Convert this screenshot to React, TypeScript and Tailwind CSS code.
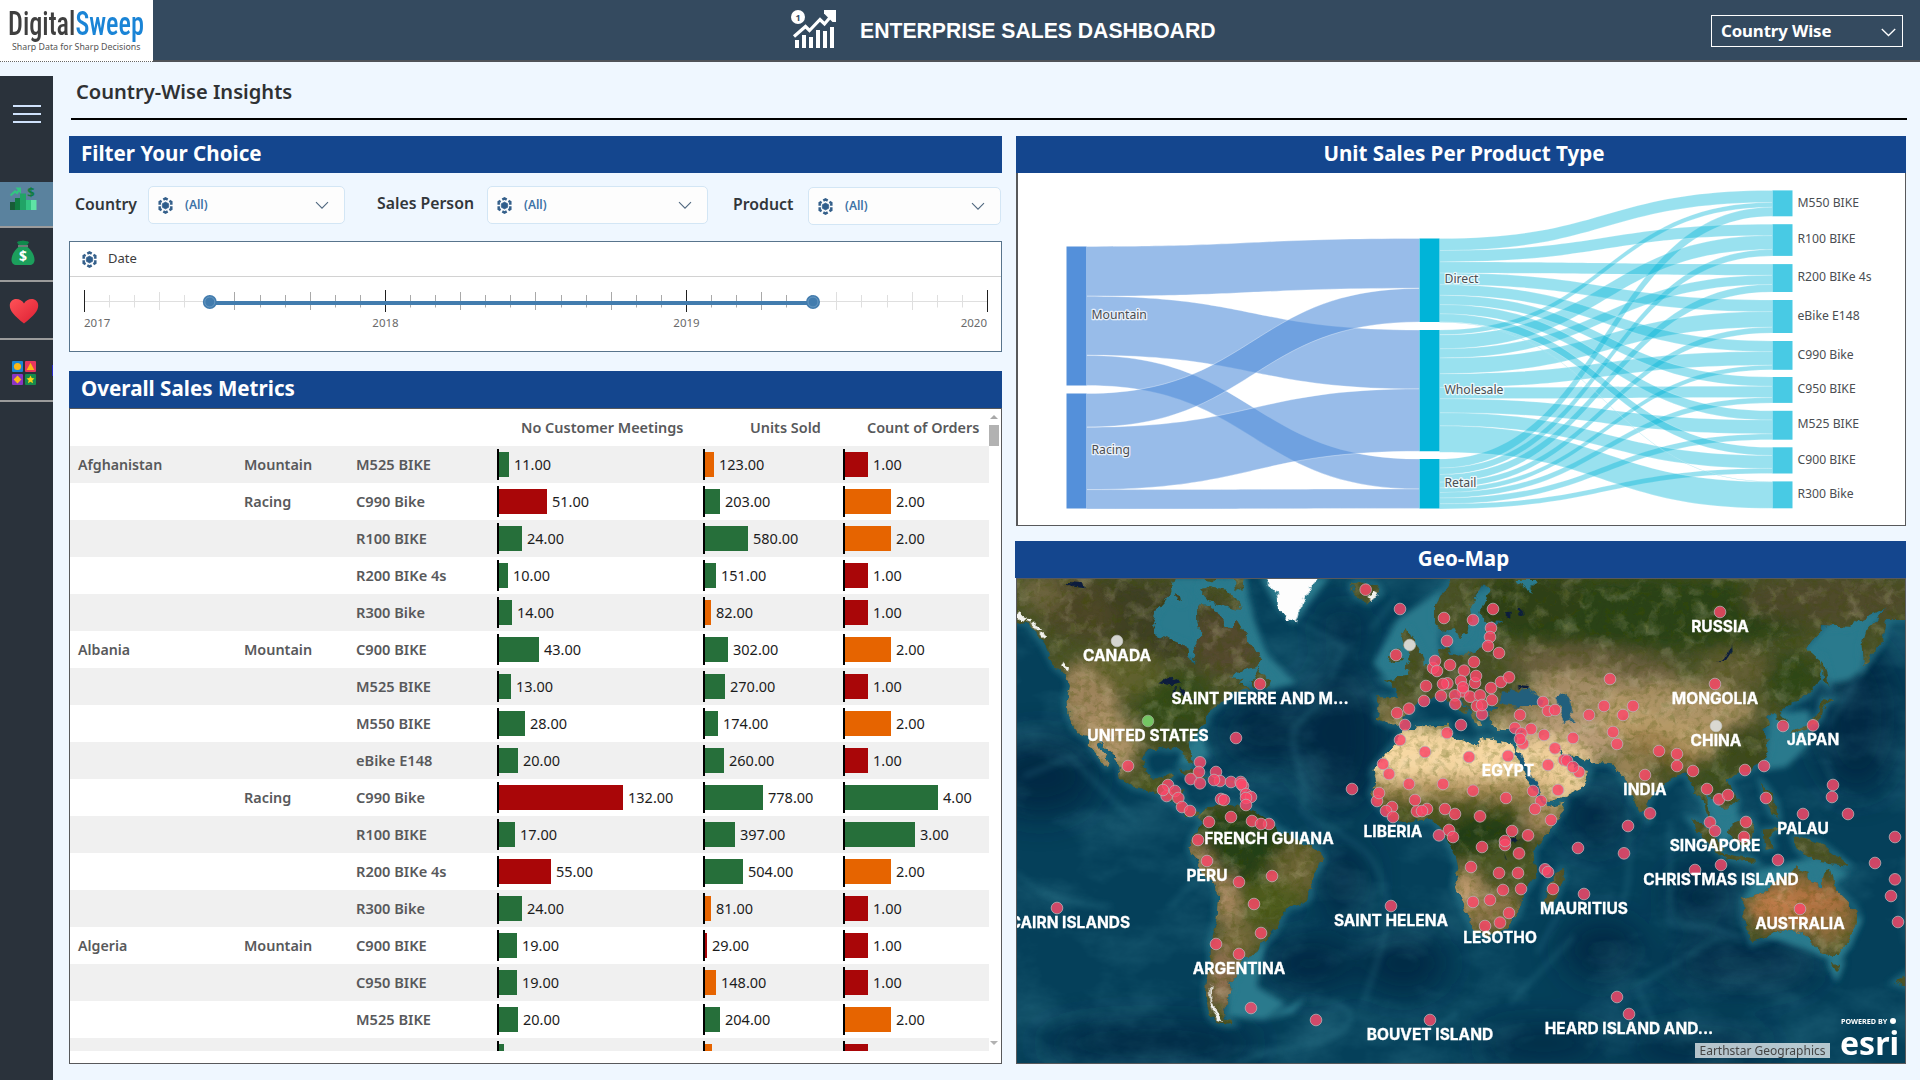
import React from 'react';

/* ---------- Sales metrics data ---------- */
type Tone = 'g' | 'r' | 'o';
type Row = [string, string, string, number, Tone, number, Tone, number, Tone];
const rows: Row[] = [
  ['Afghanistan', 'Mountain', 'M525 BIKE', 11, 'g', 123, 'o', 1, 'r'],
  ['', 'Racing', 'C990 Bike', 51, 'r', 203, 'g', 2, 'o'],
  ['', '', 'R100 BIKE', 24, 'g', 580, 'g', 2, 'o'],
  ['', '', 'R200 BIKe 4s', 10, 'g', 151, 'g', 1, 'r'],
  ['', '', 'R300 Bike', 14, 'g', 82, 'o', 1, 'r'],
  ['Albania', 'Mountain', 'C900 BIKE', 43, 'g', 302, 'g', 2, 'o'],
  ['', '', 'M525 BIKE', 13, 'g', 270, 'g', 1, 'r'],
  ['', '', 'M550 BIKE', 28, 'g', 174, 'g', 2, 'o'],
  ['', '', 'eBike E148', 20, 'g', 260, 'g', 1, 'r'],
  ['', 'Racing', 'C990 Bike', 132, 'r', 778, 'g', 4, 'g'],
  ['', '', 'R100 BIKE', 17, 'g', 397, 'g', 3, 'g'],
  ['', '', 'R200 BIKe 4s', 55, 'r', 504, 'g', 2, 'o'],
  ['', '', 'R300 Bike', 24, 'g', 81, 'o', 1, 'r'],
  ['Algeria', 'Mountain', 'C900 BIKE', 19, 'g', 29, 'r', 1, 'r'],
  ['', '', 'C950 BIKE', 19, 'g', 148, 'o', 1, 'r'],
  ['', '', 'M525 BIKE', 20, 'g', 204, 'g', 2, 'o'],
];
const tone: Record<Tone, string> = { g: 'bg-[#266f3a]', r: 'bg-[#a90608]', o: 'bg-[#e66400]' };

function BarCell({ value, scale, t, label = true }: { value: number; scale: number; t: Tone; label?: boolean }) {
  return (
    <div className="flex h-[37px] items-center">
      <div className="h-[31px] w-[2px] shrink-0 bg-black" />
      <div className={`h-[25px] shrink-0 ${tone[t]}`} style={{ width: Math.round(value * scale) }} />
      {label && <span className="ml-[5px] text-[14.500px] text-[#1c1c1c]">{value.toFixed(2)}</span>}
    </div>
  );
}

const gridCols = 'grid grid-cols-[8px_166px_112px_141px_206px_140px_146px]';

function MetricsTable() {
  return (
    <div className="flex h-[656px] w-[933px] border border-[#58595b] bg-white">
      <div className="h-[642px] w-[919px] overflow-hidden">
        <div className={`${gridCols} h-[37px] items-center text-[14.450px] font-semibold whitespace-nowrap text-[#58595b]`}>
          <span /><span /><span /><span />
          <span className="pl-[24px]">No Customer Meetings</span>
          <span className="pl-[47px]">Units Sold</span>
          <span className="pl-[24px]">Count of Orders</span>
        </div>
        {rows.map((r, i) => (
          <div key={i} className={`${gridCols} h-[37px] items-center text-[14.600px] font-semibold whitespace-nowrap text-[#58595b] ${i % 2 ? 'bg-white' : 'bg-[#f0f0f0]'}`}>
            <span />
            <span className="text-[14.200px]">{r[0]}</span>
            <span className="text-[14.400px]">{r[1]}</span>
            <span>{r[2]}</span>
            <div className="font-normal"><BarCell value={r[3]} scale={0.94} t={r[4]} /></div>
            <div className="font-normal"><BarCell value={r[5]} scale={0.0747} t={r[6]} /></div>
            <div className="font-normal"><BarCell value={r[7]} scale={23.2} t={r[8]} /></div>
          </div>
        ))}
        <div className={`${gridCols} h-[37px] bg-[#f0f0f0]`}>
          <span /><span /><span /><span />
          <BarCell value={5} scale={1} t="g" label={false} />
          <BarCell value={7} scale={1} t="o" label={false} />
          <BarCell value={23} scale={1} t="r" label={false} />
        </div>
      </div>
      <div className="flex h-[636px] w-[10px] flex-col items-center pt-[6px]">
        <div className="h-0 w-0 border-x-[4px] border-b-[4px] border-x-transparent border-b-[#a8a8a8]" />
        <div className="mt-[6px] h-[21px] w-[10px] bg-[#b2b2b2]" />
        <div className="mt-auto h-0 w-0 border-x-[4px] border-t-[4px] border-x-transparent border-t-[#b2b2b2]" />
      </div>
    </div>
  );
}

/* ---------- Filters ---------- */
function CubeIcon() {
  return (
    <svg width="15" height="17" viewBox="0 0 15 17" className="shrink-0">
      <path d="M5.300 2.700 7.500 1.500l2.200 1.200M11.400 3.900l1.900 1.100v2.700M13.300 9.300V12l-1.900 1.100M9.700 14.300 7.500 15.500l-2.200-1.200M3.600 13.100 1.700 12V9.300M1.700 7.700V5l1.900-1.100" fill="none" stroke="#345f8a" strokeWidth="2.500" />
      <path d="M7.500 5 10.700 6.700v3.600L7.500 12 4.300 10.300V6.700z" fill="#2f5d8b" stroke="#2f5d8b" strokeWidth=".6" />
    </svg>
  );
}

function Select({ className }: { className: string }) {
  return (
    <div className={`flex h-[38px] items-center rounded-[5px] border border-[#d3e6f5] bg-[#fdfdfd] pl-[9px] pr-[15px] ${className}`}>
      <CubeIcon />
      <span className="ml-[12px] text-[12px] font-semibold text-[#3d73a6]">(All)</span>
      <svg className="ml-auto" width="14" height="9" viewBox="0 0 14 9"><path d="M1 1.200 7 7.200 13 1.200" fill="none" stroke="#50687f" strokeWidth="1.100" /></svg>
    </div>
  );
}

function DateSlider() {
  const months = Array.from({ length: 37 }, (_, i) => i);
  return (
    <div className="h-[111px] w-[933px] border border-[#58748c] bg-white">
      <div className="flex h-[35px] items-center border-b border-[#d2d2d2] pl-[12px]">
        <CubeIcon />
        <span className="ml-[11px] text-[13px] text-[#3c3c3c]">Date</span>
      </div>
      <svg width="931" height="74" viewBox="70 277 931 74">
        <path d="M84.500 301.500H987.500" stroke="#dfdfdf" />
        {months.map((m) => {
          const x = Math.round(84 + m * 25.080) + 0.5;
          const major = m % 12 === 0;
          const q = m % 3 === 0;
          const inside = x > 209 && x < 815;
          return <path key={m} d={`M${x} ${major ? 290 : q ? 292 : 295}V${major ? 312 : q ? 310 : 307.5}`} stroke={major ? '#1f1f1f' : inside ? '#a9a9a9' : '#dfdfdf'} />;
        })}
        <path d="M210 303H813" stroke="#427cae" strokeWidth="4" />
        {[209.800, 813].map((x) => (
          <g key={x}><circle cx={x} cy="302" r="7" fill="#427cae" /><circle cx={x} cy="302" r="5" fill="none" stroke="#7fa9cc" strokeWidth=".6" /></g>
        ))}
        <g fontSize="11.500" fill="#6a6a6a">
          <text x="84" y="327">2017</text>
          <text x="385.500" y="327" textAnchor="middle">2018</text>
          <text x="686.500" y="327" textAnchor="middle">2019</text>
          <text x="987" y="327" textAnchor="end">2020</text>
        </g>
      </svg>
    </div>
  );
}

/* ---------- Sankey ---------- */
type Flow = [number, number, number];
const leftFlows: Flow[] = [[246.5, 238.5, 49.7], [296.2, 330, 59], [355.4, 459, 30], [393.5, 288.4, 33.6], [427.2, 388.9, 62.4], [489.6, 489, 19.4]];
const products: { name: string; y0: number; y1: number; d: number; w: number }[] = [
  { name: 'M550 BIKE', y0: 190.4, y1: 216.3, d: 12, w: 4.8 },
  { name: 'R100 BIKE', y0: 224.2, y1: 255.9, d: 11.4, w: 13.8 },
  { name: 'R200 BIKe 4s', y0: 264.1, y1: 292, d: 11.2, w: 9.1 },
  { name: 'eBike E148', y0: 300, y1: 333, d: 11.6, w: 15.6 },
  { name: 'C990 Bike', y0: 341, y1: 369.8, d: 10.600, w: 13.600 },
  { name: 'C950 BIKE', y0: 377, y1: 402.900, d: 9.300, w: 11.200 },
  { name: 'M525 BIKE', y0: 410.800, y1: 439.700, d: 9.200, w: 13.900 },
  { name: 'C900 BIKE', y0: 447.300, y1: 473.500, d: 8.200, w: 12.900 },
  { name: 'R300 Bike', y0: 481.400, y1: 508.300, d: 0.500, w: 26.400 },
];
const ribbon = (x0: number, x1: number, [a, b, h]: Flow) => {
  const m = (x0 + x1) / 2;
  return `M${x0} ${a}C${m} ${a} ${m} ${b} ${x1} ${b}V${b + h}C${m} ${b + h} ${m} ${a + h} ${x0} ${a + h}Z`;
};

function Sankey() {
  let d = 238.5, w = 330, r = 459;
  const right: Flow[] = [];
  products.forEach((p) => {
    const rest = p.name === 'R300 Bike' ? 0 : p.y1 - p.y0 - p.d - p.w;
    right.push([d, p.y0, p.d], [w, p.y0 + p.d, p.w]);
    if (rest > 0) right.push([r, p.y0 + p.d + p.w, rest]);
    d += p.d; w += p.w + 0.12; r += rest;
  });
  return (
    <svg width="887" height="352" viewBox="1018 173 887 352">
      <g fill="#5490da" fillOpacity=".6" stroke="#fff" strokeOpacity=".55" strokeWidth=".6">
        {leftFlows.map((f, i) => <path key={i} d={ribbon(1086.5, 1419.5, f)} />)}
      </g>
      <g fill="#00b4d8" fillOpacity=".4" stroke="#fff" strokeOpacity=".4" strokeWidth=".5">
        {right.map((f, i) => <path key={i} d={ribbon(1439.5, 1772.5, f)} />)}
      </g>
      <path fill="#5490da" d="M1066.5 246.500h20v139h-20zM1066.500 393.500h20v115h-20z" />
      <path fill="#00b4d8" d="M1419.500 238.500h20v83.500h-20zM1419.500 330h20v121.300h-20zM1419.500 459h20v49.500h-20z" />
      {products.map((p) => <rect key={p.name} x="1772.500" width="20" y={p.y0} height={p.y1 - p.y0} fill="#48cae4" />)}
      <g fontSize="12.200" fill="#4a4e52" stroke="#fff" strokeOpacity=".8" strokeWidth="2.600" strokeLinejoin="round" paintOrder="stroke">
        <text x="1091.500" y="319">Mountain</text>
        <text x="1091.500" y="454">Racing</text>
        <text x="1444.500" y="283">Direct</text>
        <text x="1444.500" y="394">Wholesale</text>
        <text x="1444.500" y="487">Retail</text>
        {products.map((p) => <text key={p.name} x="1797.500" y={(p.y0 + p.y1) / 2 + 3.200}>{p.name}</text>)}
      </g>
    </svg>
  );
}

/* ---------- Satellite map ---------- */
const land: string[] = [
  // North and Central America
  'M0 0V145L60 165 85 200 110 240 135 290 170 315 180 345 170 390 172 430 190 470 205 490 235 500 250 540 290 592 296 582 265 520 272 510 310 560 330 600 332 625 370 650 410 660 440 668 480 690 505 715 530 738 562 738 566 725 540 713 520 700 515 660 472 655 468 640 490 618 480 610 450 625 430 630 405 600 398 560 415 540 450 533 480 540 500 530 520 545 530 575 545 580 546 555 535 520 560 490 590 455 590 430 625 405 640 390 665 370 700 362 722 355 700 350 690 340 705 330 660 325 680 305 740 290 755 270 735 235 710 200 680 150 665 172 650 175 640 140 600 110 565 110 565 150 575 200 550 240 550 285 535 255 530 230 480 210 440 195 425 160 440 120 480 75 490 24V0Z',
  'M570 60 600 48 650 60 680 88 690 120 650 110 600 92ZM665 10H702L697 62 680 55ZM495 60 510 75 512 95 498 88ZM590 10 620 20 610 40 580 35Z',
  'M722 335 745 290 758 312 780 330 775 352 730 348Z',
  'M500 600 540 597 592 622 560 624ZM600 622 645 640 610 642ZM655 636 680 640 660 644Z',
  'M1022 45 1045 33 1100 45 1115 70 1075 97 1040 80Z',
  // South America
  'M562 738 600 708 650 700 700 712 740 725 790 760 803 780 840 798 870 820 925 840 937 862 930 885 905 920 900 950 895 990 880 1000 835 1012 815 1040 800 1075 775 1110 750 1118 745 1140 735 1157 700 1162 690 1185 675 1195 677 1215 655 1235 665 1255 650 1290 643 1315 650 1345 672 1362 650 1364 620 1356 600 1340 588 1290 590 1240 602 1180 602 1120 620 1040 625 970 615 940 580 915 555 870 538 835 550 800 565 780 578 752Z',
  // Europe and Asia
  'M1340 0H2700V150L2630 150 2622 200 2580 265 2560 290 2555 230 2570 180 2600 150 2630 112 2600 130 2550 150 2520 170 2440 165 2400 220 2390 235 2430 270 2435 300 2420 340 2390 380 2350 395 2310 430 2330 450 2325 462 2310 450 2285 430 2265 440 2280 470 2260 480 2272 510 2275 540 2260 570 2220 600 2190 612 2165 620 2150 632 2165 660 2182 690 2160 712 2140 716 2130 700 2110 690 2095 670 2092 700 2104 740 2122 770 2110 765 2090 730 2080 690 2060 670 2040 640 2030 615 2010 610 1985 625 1960 650 1930 660 1915 700 1905 720 1890 726 1870 690 1850 640 1840 620 1820 600 1805 580 1760 575 1720 570 1700 558 1662 555 1645 528 1655 562 1692 590 1740 600 1720 650 1650 685 1605 695 1590 670 1560 620 1540 580 1518 540 1526 500 1545 480 1510 475 1460 480 1440 460 1438 425 1470 415 1420 410 1400 430 1420 470 1400 472 1385 430 1365 400 1340 370 1320 358 1340 390 1375 415 1370 432 1350 420 1310 390 1290 375 1260 380 1235 385 1215 400 1200 430 1170 462 1140 467 1120 450 1103 447 1110 400 1098 385 1160 385 1167 360 1145 340 1120 330 1190 320 1200 300 1250 285 1288 270 1288 240 1310 228 1318 252 1350 257 1400 245 1425 215 1430 180 1480 155 1420 152 1415 120 1442 60 1422 45 1380 110 1385 140 1370 190 1350 208 1330 170 1300 190 1275 160 1275 110Z',
  'M1195 178 1215 215 1240 265 1240 292 1185 302 1200 262 1182 222 1172 190ZM1145 237 1178 240 1170 270 1138 277Z',
  // Africa and Madagascar
  'M1180 478 1235 470 1315 458 1325 500 1400 527 1410 504 1480 515 1507 520 1520 555 1550 620 1580 680 1610 712 1665 698 1660 720 1620 780 1570 840 1576 920 1540 970 1530 1020 1490 1072 1430 1097 1395 1092 1360 1010 1333 940 1345 890 1320 820 1290 770 1265 745 1200 757 1150 752 1100 700 1084 670 1095 640 1088 600 1120 560 1155 520Z',
  'M1656 900 1662 920 1645 965 1622 1012 1602 995 1612 940Z',
  // Islands of Asia and Oceania
  'M2435 385 2472 388 2448 402 2438 440 2420 460 2362 482 2340 494 2348 477 2408 450 2430 420ZM2438 270 2452 320 2456 350 2440 330 2433 280Z',
  'M1908 722 1922 740 1912 752ZM2255 638 2275 660 2300 700 2306 746 2282 732 2266 690Z',
  'M2038 745 2072 755 2132 820 2142 850 2120 846 2070 792ZM2128 850 2220 864 2242 882 2150 868ZM2165 762 2215 742 2236 770 2215 832 2180 822 2160 792ZM2258 782 2312 775 2276 800 2292 832 2264 840Z',
  'M2350 800 2430 818 2472 850 2515 887 2460 882 2410 872 2362 837Z',
  'M2200 990 2260 970 2290 940 2335 915 2350 895 2395 905 2395 930 2435 950 2445 898 2455 893 2470 950 2510 990 2540 1020 2540 1060 2515 1120 2480 1152 2435 1150 2410 1120 2380 1088 2330 1078 2270 1103 2225 1120 2215 1090 2200 1040ZM2465 1180 2495 1182 2480 1212ZM2700 1205 2652 1238 2700 1252Z',
];

/* cx, cy, rx, ry, fill, opacity, rotation */
type Patch = [number, number, number, number, string, number, number];
const patches: Patch[] = [
  [420, 150, 330, 110, '#3f3f22', 0.9, 10], [180, 100, 150, 90, '#574b2b', 0.6, 30], [640, 220, 110, 90, '#574a31', 0.9, 20],
  [90, 70, 70, 50, '#7a7148', 0.7, 20], [240, 400, 85, 130, '#9f845b', 1, -15], [300, 520, 80, 90, '#b19469', 1, -20], [350, 300, 120, 70, '#66662f', 0.8, 20],
  [490, 400, 120, 80, '#324a1a', 0.9, -20], [520, 490, 70, 45, '#33491d', 0.9, 0], [420, 640, 60, 22, '#4d5a23', 1, 0],
  [700, 800, 180, 80, '#233f12', 1, 0], [640, 870, 130, 70, '#263f14', 1, 20], [860, 900, 70, 90, '#6f6534', 0.9, 20], [770, 1000, 110, 70, '#4f5c20', 0.9, 0],
  [650, 990, 32, 80, '#b48e66', 1, -10], [575, 870, 18, 70, '#c09a70', 1, -35], [640, 1210, 40, 110, '#957354', 1, 5], [690, 1110, 60, 50, '#80703f', 0.8, 0],
  [1900, 130, 520, 110, '#2c4317', 1, 0], [2450, 90, 260, 70, '#514b2d', 0.9, 0], [1560, 90, 160, 80, '#2d3f18', 1, 0], [1330, 330, 130, 60, '#46502a', 0.9, 0],
  [1750, 290, 260, 60, '#6f6040', 0.9, 5], [1750, 400, 210, 90, '#a58d66', 1, 10], [1650, 500, 180, 80, '#b59974', 1, 10], [1960, 470, 200, 90, '#b99c69', 1, 12],
  [2050, 400, 190, 60, '#ab9265', 1, 8], [1960, 540, 110, 36, '#8a6c33', 0.9, 20], [2180, 300, 110, 55, '#6c6238', 0.8, 0], [2350, 330, 90, 80, '#2e4518', 0.9, 0],
  [2200, 540, 90, 80, '#3b4a20', 0.95, 0], [2100, 630, 60, 80, '#3d4f20', 1, 0], [1860, 600, 60, 60, '#9b8457', 1, 0], [1905, 670, 50, 50, '#7b6d3d', 0.9, 0],
  [1640, 600, 120, 95, '#f0cf9a', 1, 25], [1150, 425, 50, 35, '#8a7748', 0.9, 0], [1520, 440, 90, 28, '#8e7b52', 1, 0],
  [1300, 560, 270, 105, '#f7d8a3', 1, 0], [1320, 470, 60, 20, '#9a8852', 0.7, 0], [1340, 660, 300, 40, '#b3935c', 0.9, 0], [1160, 720, 120, 42, '#45501f', 1, 0],
  [1370, 720, 200, 42, '#4d5423', 1, 0], [1430, 800, 130, 70, '#223c12', 1, 0], [1600, 740, 60, 50, '#a88a5e', 1, -30], [1470, 890, 120, 60, '#4c5726', 1, 0],
  [1370, 980, 50, 80, '#c29c70', 1, -10], [1450, 1020, 80, 60, '#8d7448', 1, 0], [1630, 950, 22, 60, '#6a5a30', 1, 15],
  [2370, 1010, 160, 75, '#b0713f', 1, 0], [2300, 1000, 80, 50, '#bd7c49', 1, 0], [2480, 1080, 60, 60, '#957140', 1, 0], [2500, 1120, 36, 40, '#4f5a28', 0.9, 20], [2370, 925, 70, 20, '#77683a', 0.9, 0],
];

const pins: [number, number][] = [
  [1067, 59], [1170, 117], [1158, 255], [750, 342], [678, 504], [354, 588], [570, 577], [567, 606], [542, 627], [570, 640], [618, 606], [630, 633], [612, 630], [663, 636], [692, 636], [699, 648], [694, 642], [708, 672], [723, 681], [708, 684], [708, 705], [633, 687], [642, 690], [474, 645], [470, 678], [459, 660], [495, 663], [505, 684], [516, 711], [540, 723], [597, 756], [663, 741], [726, 753], [777, 762], [753, 762], [1026, 657],
  [1302, 144], [1389, 150], [1449, 117], [1443, 174], [1440, 201], [1434, 228], [1467, 249], [1311, 213], [1269, 294], [1275, 273], [1281, 303], [1320, 285], [1362, 302], [1392, 276], [1395, 339], [1398, 318], [1353, 333], [1359, 364], [1359, 352], [1312, 340], [1299, 342], [1248, 348], [1242, 393], [1197, 416], [1161, 429], [1185, 465], [1170, 510], [1293, 378], [1335, 376], [1336, 402], [1380, 380], [1410, 376], [1443, 354], [1473, 336], [1497, 322], [1446, 390], [1401, 408], [1416, 433], [1416, 405], [1353, 465], [1311, 489], [1530, 435], [1599, 396], [1614, 423], [1635, 420], [1515, 474], [1563, 477], [1534, 490], [1539, 521], [1530, 507], [1602, 495], [1689, 504], [1635, 535], [1494, 558], [1614, 585], [1662, 570], [1671, 572], [1707, 606], [1689, 591],
  [1245, 546], [1377, 561], [1119, 582], [1137, 612], [1197, 642], [1299, 642], [1389, 662], [1488, 684], [1101, 693], [1107, 669], [1215, 690], [1146, 711], [1128, 723], [1149, 741], [1221, 724], [1251, 717], [1236, 723], [1305, 717], [1335, 732], [1410, 739], [1569, 663], [1593, 693], [1644, 660], [1575, 717], [1623, 750], [1317, 780], [1287, 796], [1329, 801], [1506, 783], [1554, 796], [1485, 825], [1485, 813], [1416, 831], [1527, 850], [1383, 891], [1467, 909], [1524, 909], [1479, 960], [1533, 957], [1605, 898], [1614, 906], [1629, 957], [1389, 996], [1440, 990], [1497, 1029], [1470, 1058], [1425, 1068], [1143, 1008], [1722, 972], [1704, 834], [1842, 850], [1854, 768], [1920, 730], [1905, 615], [1800, 327], [1782, 408], [1737, 435], [1869, 408], [1839, 435], [1809, 486], [1821, 522],
  [2130, 126], [2115, 342], [2319, 468], [2409, 466], [1947, 543], [2001, 552], [2001, 588], [2049, 603], [2205, 600], [2262, 588], [2091, 657], [2127, 688], [2154, 675], [2268, 684], [2469, 645], [2466, 681], [2379, 732], [2514, 732], [2208, 756], [2100, 757],
  [564, 810], [591, 873], [687, 936], [786, 918], [732, 1002], [753, 1089], [618, 1122], [687, 1152], [723, 1314], [918, 1350], [1260, 1350], [141, 1014],
  [2115, 783], [2202, 801], [2304, 870], [2133, 885], [2055, 900], [2370, 1017], [2655, 801], [2595, 879], [2655, 928], [2643, 978], [2664, 1056], [1821, 1281], [1857, 1332],
];

const labels: [string, number, number][] = [
  ['CANADA', 321, 273], ['SAINT PIERRE AND M...', 750, 402], ['UNITED STATES', 414, 514], ['EGYPT', 1494, 618], ['LIBERIA', 1149, 801], ['RUSSIA', 2130, 187], ['MONGOLIA', 2115, 402], ['CHINA', 2118, 528], ['JAPAN', 2409, 525], ['INDIA', 1905, 675], ['PALAU', 2379, 792], ['FRENCH GUIANA', 777, 822], ['PERU', 591, 933], ['SAINT HELENA', 1143, 1068], ['PITCAIRN ISLANDS', 143, 1074], ['ARGENTINA', 687, 1212], ['BOUVET ISLAND', 1260, 1410], ['LESOTHO', 1470, 1119], ['MAURITIUS', 1722, 1032], ['SINGAPORE', 2115, 844], ['CHRISTMAS ISLAND', 2133, 946], ['AUSTRALIA', 2370, 1078], ['HEARD ISLAND AND...', 1857, 1392],
];

const ridges = [
  'M850 480C890 430 900 420 950 380M850 480C840 560 900 640 880 700S980 760 1000 800C1080 840 1120 900 1130 1000S1090 1200 1060 1300',
  'M870 160 1000 230 960 330M1080 180 1160 80M40 620 180 560 380 760M18 910C80 960 130 1000 300 1010',
  'M1980 760V1060C2060 1080 2100 1060 2200 1110M1860 620C1850 800 1870 900 1840 1000M1690 1100 1500 1300',
  'M2690 860 2670 1000 2690 1120M2130 1100 1880 1250 1950 1400M2450 720C2480 660 2470 620 2440 560M2625 200 2450 470',
  'M480 1010 560 930M680 1480C760 1430 900 1440 980 1390S1020 1300 900 1290M1240 1400 1340 1330M1580 1150 1660 1010',
];

function WorldMap() {
  return (
    <svg className="absolute inset-0 h-full w-full" viewBox="21 27 2664 1452" preserveAspectRatio="none">
      <defs>
        <clipPath id="landClip">{land.map((d, i) => <path key={i} d={d} />)}</clipPath>
        <filter id="soft" x="-10%" y="-10%" width="120%" height="120%"><feGaussianBlur stdDeviation="9" /></filter>
        <filter id="softer" x="-50%" y="-50%" width="200%" height="200%"><feGaussianBlur stdDeviation="24" /></filter>
        <filter id="deep" x="-50%" y="-50%" width="200%" height="200%"><feGaussianBlur stdDeviation="50" /></filter>
        <filter id="coast" x="0" y="0" width="100%" height="100%">
          <feTurbulence type="fractalNoise" baseFrequency=".035" numOctaves="3" seed="4" result="n" />
          <feDisplacementMap in="SourceGraphic" in2="n" scale="26" xChannelSelector="R" yChannelSelector="G" />
        </filter>
        <filter id="grainDark" x="0" y="0" width="100%" height="100%">
          <feTurbulence type="fractalNoise" baseFrequency=".05" numOctaves="5" seed="11" />
          <feColorMatrix values="0 0 0 0 .05  0 0 0 0 .08  0 0 0 0 0  2.600 0 0 0 -1.150" />
        </filter>
        <filter id="grainLight" x="0" y="0" width="100%" height="100%">
          <feTurbulence type="fractalNoise" baseFrequency=".02" numOctaves="6" seed="29" />
          <feColorMatrix values="0 0 0 0 .85  0 0 0 0 .76  0 0 0 0 .55  0 2.400 0 0 -1.200" />
        </filter>
        <filter id="sea" x="0" y="0" width="100%" height="100%">
          <feTurbulence type="fractalNoise" baseFrequency=".004 .007" numOctaves="6" seed="7" />
          <feColorMatrix values="0 0 0 0 .12  0 0 0 0 .46  0 0 0 0 .54  0 2 0 0 -.850" />
        </filter>
      </defs>
      <rect width="2700" height="1500" fill="#05405a" />
      <g fill="#01223c" opacity=".75" filter="url(#deep)">
        <ellipse cx="90" cy="620" rx="170" ry="120" /><ellipse cx="760" cy="480" rx="130" ry="110" /><ellipse cx="990" cy="500" rx="130" ry="220" />
        <ellipse cx="900" cy="1180" rx="140" ry="80" /><ellipse cx="1180" cy="1180" rx="130" ry="90" /><ellipse cx="1000" cy="930" rx="70" ry="120" />
        <ellipse cx="2540" cy="440" rx="130" ry="230" /><ellipse cx="2200" cy="1180" rx="230" ry="80" /><ellipse cx="2080" cy="980" rx="110" ry="90" /><ellipse cx="1780" cy="1140" rx="120" ry="90" />
        <ellipse cx="420" cy="1420" rx="330" ry="60" /><ellipse cx="1600" cy="1420" rx="200" ry="50" /><ellipse cx="2060" cy="1430" rx="220" ry="50" /><ellipse cx="1760" cy="740" rx="90" ry="90" /><ellipse cx="1000" cy="180" rx="70" ry="60" />
      </g>
      <rect width="2700" height="1500" filter="url(#sea)" opacity=".24" />
      <g fill="none" stroke="#3b8a9c" strokeWidth="12" opacity=".3" filter="url(#soft)">{ridges.map((d, i) => <path key={i} d={d} />)}</g>
      {/* shallow shelves */}
      <g fill="#2b7a8d" filter="url(#soft)">
        <path d="M420 20H700L780 330 700 350 600 300 420 200ZM700 60 770 250 860 340 780 360 740 300ZM750 20 800 110 850 165 890 110 960 20ZM1160 150 1290 60 1290 300 1140 345 1090 280ZM1330 100 1460 40 1440 250 1320 260ZM2380 240 2450 160 2620 120 2580 180 2560 300 2520 330 2460 340ZM2280 430 2400 420 2400 520 2330 590 2260 600ZM2080 680 2180 700 2190 760 2140 840ZM2240 900 2420 860 2520 910 2440 960 2200 1000Z" />
        <path d="M655 1200 770 1110 740 1250 830 1300 760 1350 650 1340ZM890 1280 850 1330 760 1350ZM2210 1080 2560 1040 2500 1160 2480 1240 2450 1160ZM1340 100 1300 200 1340 260ZM500 590 600 560 570 470Z" />
      </g>
      <g fill="none" stroke="#2b7a8d" strokeWidth="16" opacity=".75" filter="url(#soft)">{land.map((d, i) => <path key={i} d={d} />)}</g>
      <g filter="url(#coast)">
        <g clipPath="url(#landClip)">
          <rect width="2700" height="1500" fill="#4a5229" />
          <g filter="url(#softer)">
            {patches.map(([cx, cy, rx, ry, f, o, a], i) => <ellipse key={i} cx={cx} cy={cy} rx={rx} ry={ry} fill={f} opacity={o} transform={`rotate(${a} ${cx} ${cy})`} />)}
          </g>
          <rect width="2700" height="1500" filter="url(#grainDark)" opacity=".34" />
          <rect width="2700" height="1500" filter="url(#grainLight)" opacity=".26" />
        </g>
        {/* ice */}
        <path fill="#fdfdfd" d="M768 0H945L895 60 872 110 860 157 830 147 805 112 800 70 775 45Z" />
        <path fill="none" stroke="#f2f2ee" strokeWidth="11" strokeDasharray="30 6 14 8" d="M18 135 70 160 105 205M150 285 175 300" />
        <path fill="#f2f2ee" d="M1075 80 1100 68 1105 80 1085 90ZM600 1250 607 1250 606 1300 640 1356 620 1350 602 1310Z" />
        {/* inland seas and lakes */}
        <path fill="#215f7b" d="M1470 402 1480 370 1500 352 1530 366 1560 360 1602 395 1590 408 1530 408ZM1640 378 1665 368 1680 400 1690 455 1662 462 1652 420Z" />
        <path fill="#2b7a8d" d="M1520 30H1590L1560 50 1568 75 1545 55Z" />
        <path fill="#0c1f3c" d="M448 340 480 320 512 340 480 346ZM490 352 500 352 497 385 487 380ZM515 350 535 362 530 378 515 368ZM525 390 560 378 550 388ZM1490 130 1508 128 1506 152 1492 150ZM1525 110 1535 112 1538 135 1528 130ZM2165 222 2168 240 2150 275 2125 280 2150 255ZM1502 800 1520 802 1518 818 1504 816ZM1480 845 1490 870 1484 868ZM170 35 220 40 225 55 190 50ZM1530 345 1555 348 1550 360 1532 358Z" />
        <path fill="none" stroke="#17587a" strokeWidth="13" d="M1524 550 1555 610 1590 672" />
      </g>
      <g stroke="#b9a9b0" strokeWidth="2.500" fill="#fb4869" fillOpacity=".82">
        {pins.map(([x, y], i) => <circle key={i} cx={x} cy={y} r="17.500" />)}
      </g>
      <g stroke="#c9c9c9" strokeWidth="2" fill="#dcdcd8" fillOpacity=".95">
        <circle cx="321" cy="213" r="17.500" /><circle cx="1199" cy="225" r="17.500" /><circle cx="2118" cy="468" r="17.500" />
      </g>
      <circle cx="414" cy="453" r="17.500" fill="#74c564" stroke="#a9b7a0" strokeWidth="2" />
      <g fontFamily="Inter, sans-serif" fontWeight="700" fontSize="46.500" fill="#fff" stroke="#fff" strokeWidth=".8" textAnchor="middle">
        {labels.map(([t, x, y]) => <text key={t} x={x} y={y}>{t}</text>)}
      </g>
    </svg>
  );
}

/* ---------- Chrome ---------- */
function PanelTitle({ children, center = false }: { children: React.ReactNode; center?: boolean }) {
  return <h2 className={`flex h-[37px] shrink-0 items-center bg-[#14468e] pb-[2px] text-[20.600px] font-bold text-white ${center ? 'justify-center pl-[6px]' : 'pl-[12px]'}`}>{children}</h2>;
}

function Header() {
  return (
    <header className="flex h-[62px] shrink-0 border-b-2 border-[#505358] bg-[#344a5f]">
      <div className="h-[62px] w-[153px] shrink-0 border-b border-dotted border-[#666] bg-white pl-[8px]">
        <div className="mt-[4px] h-[37px] origin-left scale-x-[0.795] whitespace-nowrap font-['Roboto_Condensed'] text-[33px] leading-[40px] font-medium text-[#3f3f3f]">
          Digital<span className="text-[#1a84d6]">Sweep</span>
        </div>
        <div className="ml-[4px] text-[8.800px] leading-[13px] whitespace-nowrap text-[#555]">Sharp Data for Sharp Decisions</div>
      </div>
      <svg className="mt-[8px] ml-[637px] shrink-0" width="48" height="42" viewBox="790 8 48 42">
        <circle cx="798" cy="17" r="7" fill="#fff" />
        <text x="798" y="20.500" textAnchor="middle" fontSize="9" fontWeight="700" fill="#344a5f">1</text>
        <path d="M794 36.500 805.500 26.500 809.500 30.500 820 19.500 824.500 24 832.500 14.500" fill="none" stroke="#fff" strokeWidth="3.200" />
        <path d="M824 10H836V22H832.500L824 13.500Z" fill="#fff" />
        <path d="M795 40h4v8h-4zM802 35h4v13h-4zM809 37h4v11h-4zM816 30h4v18h-4zM823 31h4v17h-4zM830 27h4v21h-4z" fill="#fff" />
      </svg>
      <h1 className="mt-[16px] ml-[22px] w-[400px] font-['Liberation_Sans'] text-[21.200px] leading-[30px] font-bold whitespace-nowrap text-white">ENTERPRISE SALES DASHBOARD</h1>
      <div className="mt-[15px] mr-[17px] ml-auto flex h-[32px] w-[192px] items-center border border-white pr-[6px] pl-[9px]">
        <span className="text-[16.800px] font-bold tracking-[-0.1px] text-white">Country Wise</span>
        <svg className="mt-[3px] ml-auto" width="15" height="9" viewBox="0 0 15 9"><path d="M.8 1 7.500 7.500 14.200 1" fill="none" stroke="#fff" strokeWidth="1.300" /></svg>
      </div>
    </header>
  );
}

function Sidebar() {
  return (
    <aside className="mt-[14px] flex w-[53px] shrink-0 flex-col bg-[#2a323b]">
      <div className="flex h-[106px] flex-col gap-[6px] pt-[29px] pl-[13px]">
        <i className="h-[2px] w-[28px] bg-[#cfe2fb]" /><i className="h-[2px] w-[28px] bg-[#cfe2fb]" /><i className="h-[2px] w-[28px] bg-[#cfe2fb]" />
      </div>
      <div className="h-[46px] border-b-2 border-[#9b9b9b] bg-[#5a829e] pt-[2px] pl-[9px]">
        <svg width="29" height="28" viewBox="9 184 29 28">
          <path d="M10.500 195.500 15 191.500 17 193 19.500 189.500" fill="none" stroke="#33c481" strokeWidth="2.200" /><path d="M15.500 187.500H21V194Z" fill="#33c481" />
          <text x="31" y="197" textAnchor="middle" fontSize="13" fontWeight="700" fill="#107c41">$</text>
          <path d="M10 202h5v8h-5z" fill="#185c37" /><path d="M15 198h5v12h-5z" fill="#107c41" /><path d="M20 193.500h6V210h-6z" fill="#21a366" /><path d="M26 200h5v10h-5z" fill="#33c481" /><path d="M31 200h5.500v10H31z" fill="#5fe3a5" />
        </svg>
      </div>
      <div className="h-[54px] border-b-2 border-[#9b9b9b] pt-[11px] pl-[10px]">
        <svg width="27" height="28" viewBox="10 239 27 28">
          <path d="M17 242.500c1-2 3-1 6-2 3 1 5 0 6 2l-3 4h-6z" fill="#0f8a4c" />
          <path d="M19 246.500h8c4 3.500 7.500 8 7.500 13.500 0 3-2 5-5 5h-13c-3 0-5-2-5-5 0-5.500 3.500-10 7.500-13.500z" fill="#1c9f5c" />
          <path d="M18 245h10v2H18z" fill="#6f7b78" />
          <text x="23" y="261" textAnchor="middle" fontSize="14" fontWeight="700" fill="#fff">$</text>
        </svg>
      </div>
      <div className="h-[58px] border-b-2 border-[#9b9b9b] pt-[16px] pl-[9px]">
        <svg width="30" height="27" viewBox="9 298 30 27">
          <defs><linearGradient id="heart" x1="0" y1="0" x2="1" y2="1"><stop stopColor="#ff5257" /><stop offset="1" stopColor="#dc1f33" /></linearGradient></defs>
          <path d="M24 323.500C14 315.500 9.800 311 9.800 305.500c0-4 3-6.500 6.500-6.500 3.200 0 6 1.500 7.700 4.500 1.700-3 4.500-4.500 7.700-4.500 3.500 0 6.500 2.500 6.500 6.500 0 5.500-4.200 10-14.200 18z" fill="url(#heart)" />
        </svg>
      </div>
      <div className="flex h-[62px] border-b-2 border-[#9b9b9b] pt-[20px] pl-[11px]">
        <svg width="26" height="27" viewBox="11 360 26 27">
          <rect x="12" y="361" width="11" height="11" rx="1" fill="#1b87d6" /><rect x="25" y="361" width="11" height="11" rx="1" fill="#e8375f" /><rect x="12" y="374" width="11" height="11" rx="1" fill="#8a35c4" /><rect x="25" y="374" width="11" height="11" rx="1" fill="#168a4c" />
          <circle cx="17.500" cy="366.500" r="3.600" fill="#fcb816" /><path d="M30.500 362.800 34.300 370H26.700Z" fill="#fcb816" /><path d="M17.500 375.600 21.400 379.500 17.500 383.400 13.600 379.500Z" fill="#fcb816" />
          <path d="M30.500 375.500 31.700 378.100 34.500 378.400 32.400 380.300 33 383.200 30.500 381.700 28 383.200 28.600 380.300 26.500 378.400 29.300 378.100Z" fill="#fcd116" />
        </svg>
        <i className="mt-[5px] ml-auto h-[11px] w-px bg-[#2a2ac8]" />
      </div>
    </aside>
  );
}

export default function App() {
  return (
    <div className="flex h-[1080px] w-[1920px] flex-col overflow-hidden bg-[#eff7ff] font-['Noto_Sans',sans-serif]">
      <Header />
      <div className="flex min-h-0 flex-1">
        <Sidebar />
        <main className="flex flex-1 flex-col pl-[16px]">
          <div className="ml-[2px] flex h-[58px] w-[1836px] items-start border-b-2 border-black pt-[18px] pl-[5px]">
            <span className="text-[20.100px] leading-[24px] font-semibold text-[#2f3133]">Country-Wise Insights</span>
          </div>
          <div className="mt-[16px] flex">
            <section className="flex w-[933px] flex-col">
              <PanelTitle>Filter Your Choice</PanelTitle>
              <div className="flex h-[68px] items-start pt-[13px] text-[15.800px] font-semibold text-[#32363a]">
                <span className="mt-[7px] w-[79px] pl-[6px]">Country</span>
                <Select className="w-[197px]" />
                <span className="mt-[6px] w-[142px] pl-[32px] whitespace-nowrap">Sales Person</span>
                <Select className="w-[221px]" />
                <span className="mt-[7px] w-[100px] pl-[25px]">Product</span>
                <Select className="mt-px w-[193px]" />
              </div>
              <DateSlider />
              <div className="mt-[19px] flex flex-col">
                <PanelTitle>Overall Sales Metrics</PanelTitle>
                <MetricsTable />
              </div>
            </section>
            <section className="ml-[14px] flex w-[890px] flex-col">
              <PanelTitle center>Unit Sales Per Product Type</PanelTitle>
              <div className="h-[353px] border-r border-b border-l-2 border-[#58595b] bg-white">
                <Sankey />
              </div>
              <div className="mt-[15px] -ml-px flex flex-col">
                <PanelTitle center>Geo-Map</PanelTitle>
              </div>
              <div className="relative h-[486px] overflow-hidden border border-[#58595b]">
                <WorldMap />
                <div className="absolute right-[75px] bottom-[5px] flex h-[15px] w-[135px] items-center justify-center bg-[#ffffffb3] text-[12px] whitespace-nowrap text-[#454545]">Earthstar Geographics</div>
                <div className="absolute right-[7px] bottom-[7px] flex h-[40px] w-[58px] flex-col justify-between text-white">
                  <div className="flex items-center gap-[3px] pl-px text-[7.200px] leading-[10px] font-bold whitespace-nowrap">POWERED BY<i className="h-[6px] w-[6px] rounded-full bg-white" /></div>
                  <div className="text-[32px] leading-[26px] font-bold">esri</div>
                </div>
              </div>
            </section>
          </div>
        </main>
      </div>
    </div>
  );
}
